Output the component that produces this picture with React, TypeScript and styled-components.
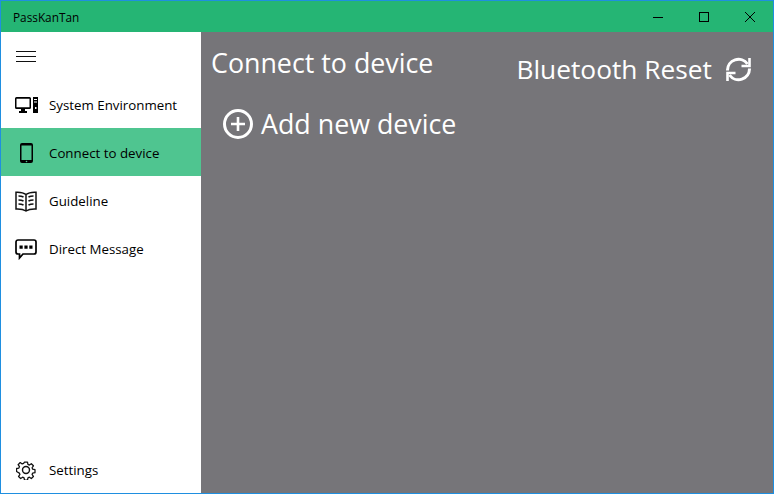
import React from "react";
import styled, { createGlobalStyle } from "styled-components";

const Global = createGlobalStyle`
  html, body { margin: 0; padding: 0; background: #fff; }
  body { font-family: "Open Sans", "Noto Sans", sans-serif; }
`;

const Win = styled.div`
  width: 774px;
  height: 494px;
  box-sizing: border-box;
  border: 1px solid #1f8fe0;
  display: flex;
  flex-direction: column;
  overflow: hidden;
`;
const TitleBar = styled.header`
  height: 31px;
  flex: none;
  background: #25b574;
  display: flex;
  align-items: center;
  padding-left: 12px;
  color: #000;
`;
const AppName = styled.span`
  font-size: 11.8px;
  flex: 1;
`;
const WinButton = styled.button`
  width: 46px;
  height: 31px;
  border: 0;
  padding: 0;
  background: transparent;
  display: flex;
  align-items: center;
  justify-content: center;
`;
const Body = styled.div`
  flex: 1;
  display: flex;
  min-height: 0;
`;
const Sidebar = styled.nav`
  width: 200px;
  flex: none;
  background: #fff;
  display: flex;
  flex-direction: column;
`;
const Spacer = styled.div`
  flex: 1;
`;
const NavRow = styled.div<{ $active?: boolean }>`
  height: 48px;
  box-sizing: border-box;
  padding-top: 2px;
  flex: none;
  display: flex;
  align-items: center;
  background: ${(p) => (p.$active ? "#4fc590" : "transparent")};
  color: #000;
  font-size: 13.3px;
`;
const IconSlot = styled.span`
  width: 48px;
  flex: none;
  display: flex;
  justify-content: center;
  align-items: center;
  padding-left: 2px;
  box-sizing: border-box;
`;
const Main = styled.main`
  flex: 1;
  background: #767579;
  color: #fff;
  padding: 10px 22px 0 10px;
  min-width: 0;
`;
const HeaderRow = styled.div`
  display: flex;
  justify-content: space-between;
  align-items: flex-start;
`;
const PageTitle = styled.h1`
  margin: 0;
  font-size: 26.8px;
  font-weight: 400;
  line-height: 42px;
`;
const ResetButton = styled.div`
  display: flex;
  align-items: center;
  gap: 14px;
  font-size: 26.3px;
  line-height: 42px;
  padding-top: 6px;
`;
const AddRow = styled.div`
  display: flex;
  align-items: center;
  gap: 8px;
  font-size: 26.8px;
  line-height: 42px;
  margin: 13px 0 0 12px;
`;

const Menu = () => (
  <svg width="20" height="12" viewBox="0 0 20 12" stroke="#111" strokeWidth="1" shapeRendering="crispEdges">
    <path d="M0 .5h20M0 5.5h20M0 10.5h20" />
  </svg>
);
const Pc = () => (
  <svg width="23" height="16" viewBox="0 0 23 16" fill="#000">
    <path d="M1.500 0h13A1.500 1.500 0 0 1 16 1.500v9a1.500 1.500 0 0 1-1.500 1.500h-13A1.500 1.500 0 0 1 0 10.500v-9A1.500 1.500 0 0 1 1.500 0zM1.500 1.800v8.500h13V1.800z" fillRule="evenodd" />
    <path d="M6 12h4v2h2v2H4v-2h2z" />
    <path d="M18 0h5v16h-5zM19 2v1h3V2zM19 4.500v1h3v-1zM20 10v2h1.500v-2z" fillRule="evenodd" />
  </svg>
);
const Phone = () => (
  <svg width="13" height="20" viewBox="0 0 13 20" fill="#000">
    <path d="M2 0h9a2 2 0 0 1 2 2v16a2 2 0 0 1-2 2H2a2 2 0 0 1-2-2V2a2 2 0 0 1 2-2zM1.500 2.500v14.500h10V2.500z" fillRule="evenodd" />
    <circle cx="6.500" cy="18.500" r=".8" fill="#4fc590" />
  </svg>
);
const Book = () => (
  <svg width="22" height="21" viewBox="0 0 22 21" fill="none" stroke="#111" strokeWidth="1.500">
    <path d="M11 3.500C8.500 1.500 5 1 1 1.200V18C5 17.800 8.500 18.300 11 20C13.500 18.300 17 17.800 21 18V1.200C17 1 13.500 1.500 11 3.500V20" />
    <path d="M3.500 5c2 0 3.600.3 5 1M3.500 9c2 0 3.600.3 5 1M3.500 13c2 0 3.600.3 5 1M18.500 5c-2 0-3.600.3-5 1M18.500 9c-2 0-3.600.3-5 1M18.500 13c-2 0-3.600.3-5 1" />
  </svg>
);
const Chat = () => (
  <svg width="22" height="21" viewBox="0 0 22 21">
    <path d="M3 1h16a2 2 0 0 1 2 2v10a2 2 0 0 1-2 2H8l-3.500 4v-4H3a2 2 0 0 1-2-2V3a2 2 0 0 1 2-2z" fill="none" stroke="#000" strokeWidth="1.700" />
    <path d="M4.500 6.500h3.200v3.200H4.500zM9.400 6.500h3.200v3.200H9.400zM14.300 6.500h3.200v3.200h-3.200z" fill="#000" />
  </svg>
);
const Gear = () => (
  <svg width="20" height="20" viewBox="0 0 24 24" fill="none" stroke="#111" strokeWidth="1.700" strokeLinejoin="round">
    <path d="M10 1.500h4l.6 3.100 1.900.8 2.600-1.800 2.800 2.800-1.800 2.600.8 1.900 3.100.6v4l-3.100.6-.8 1.900 1.800 2.600-2.800 2.800-2.600-1.800-1.900.8-.6 3.100h-4l-.6-3.100-1.900-.8-2.600 1.800-2.800-2.800 1.800-2.600-.8-1.900L-.6 14v-4l3.100-.6.8-1.900-1.800-2.600 2.800-2.800 2.600 1.800 1.900-.8z" transform="translate(1.200 1.200) scale(.9)" />
    <circle cx="12" cy="12" r="4.200" />
  </svg>
);
const Plus = () => (
  <svg width="30" height="30" viewBox="0 0 30 30" fill="none" stroke="#fff" strokeWidth="3">
    <circle cx="15" cy="15" r="13.500" />
    <path d="M15 8v14M8 15h14" strokeWidth="2.600" />
  </svg>
);
const Refresh = () => (
  <svg width="25" height="25" viewBox="0 0 25 25" fill="none" stroke="#fff" strokeWidth="3">
    <path d="M1.500 13.500A11 11 0 0 1 21.500 7" />
    <path d="M23.500 11.500A11 11 0 0 1 3.500 18" />
    <path d="M23.500 1v8h-8M1.500 24v-8h8" strokeWidth="2.600" />
  </svg>
);

const items = [
  { label: "System Environment", icon: <Pc /> },
  { label: "Connect to device", icon: <Phone />, active: true },
  { label: "Guideline", icon: <Book /> },
  { label: "Direct Message", icon: <Chat /> },
];

export default function App() {
  return (
    <Win>
      <Global />
      <TitleBar>
        <AppName>PassKanTan</AppName>
        <WinButton aria-label="Minimize">
          <svg width="10" height="10" stroke="#000" shapeRendering="crispEdges"><path d="M0 5.500h10" /></svg>
        </WinButton>
        <WinButton aria-label="Maximize">
          <svg width="10" height="10" fill="none" stroke="#000" shapeRendering="crispEdges"><path d="M.5.500h9v9h-9z" /></svg>
        </WinButton>
        <WinButton aria-label="Close">
          <svg width="10" height="10" stroke="#000"><path d="M0 0l10 10M10 0L0 10" /></svg>
        </WinButton>
      </TitleBar>
      <Body>
        <Sidebar>
          <NavRow><IconSlot><Menu /></IconSlot></NavRow>
          {items.map((i) => (
            <NavRow key={i.label} $active={i.active}>
              <IconSlot>{i.icon}</IconSlot>
              {i.label}
            </NavRow>
          ))}
          <Spacer />
          <NavRow><IconSlot><Gear /></IconSlot>Settings</NavRow>
        </Sidebar>
        <Main>
          <HeaderRow>
            <PageTitle>Connect to device</PageTitle>
            <ResetButton>Bluetooth Reset <Refresh /></ResetButton>
          </HeaderRow>
          <AddRow><Plus />Add new device</AddRow>
        </Main>
      </Body>
    </Win>
  );
}
